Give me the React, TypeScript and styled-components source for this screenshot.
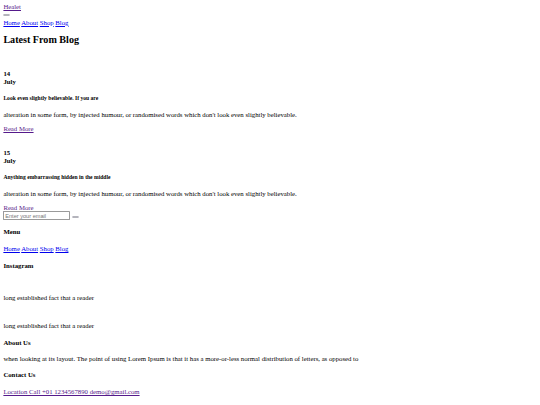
import styled, { createGlobalStyle } from "styled-components";

// The reference is a 1280px-wide page shot down to 540px.
const GlobalStyle = createGlobalStyle`
  html {
    zoom: 0.421875;
  }
  body {
    margin: 8px;
    font-family: "Liberation Serif", "Times New Roman", serif;
    font-size: 16px;
    line-height: 1.15;
    color: #000;
    background: #fff;
  }
`;

const Link = styled.a<{ $visited?: boolean }>`
  color: ${(p) => (p.$visited ? "#551a8b" : "#0000ee")};
  text-decoration: underline;
  cursor: pointer;
`;

const TogglerRow = styled.div`
  height: 18.4px;
  display: flex;
  align-items: center;
`;

const Toggler = styled.button`
  width: 16px;
  height: 6px;
  padding: 0;
  border: 1px solid #b4b4bc;
  border-radius: 3px;
  background: #ececf0;
`;

const Nav = styled.div`
  display: block;
`;

const SectionTitle = styled.h2`
  font-size: 24px;
  font-weight: bold;
  margin: 18px 0 20px;
`;

const Spacer = styled.div<{ $h: number }>`
  height: ${(p) => p.$h}px;
`;

const PostDate = styled.h4`
  font-size: 16px;
  margin: 21.28px 0;
`;

const PostTitle = styled.h5`
  font-size: 13.28px;
  margin: 22.18px 0;
`;

const Text = styled.p`
  margin: 16px 0;
`;

const Form = styled.form`
  display: flex;
  align-items: center;
  gap: 4px;
  height: 18px;
`;

const EmailInput = styled.input`
  width: 150px;
  height: 14px;
  font-family: Arial, "Liberation Sans", sans-serif;
  font-size: 13.33px;
  padding: 1px 2px;
  border: 2px solid #9a9a9a;
  border-radius: 2px;
  &::placeholder {
    color: #757575;
  }
`;

const SmallButton = styled.button`
  width: 16px;
  height: 6px;
  padding: 0;
  margin-top: 6px;
  border: 1px solid #b4b4bc;
  border-radius: 3px;
  background: #ececf0;
`;

const FooterTitle = styled.h4`
  font-size: 16px;
  margin: 21.28px 0;
`;

const ContactTitle = styled(FooterTitle)`
  margin: 20px 0 22px;
`;

const Faint = styled.p`
  color: #555;
  margin: 16px 0;
`;

function Post({ day, title, gap }: { day: string; title: string; gap: number }) {
  return (
    <div>
      <Spacer $h={gap} />
      <PostDate>
        {day}
        <br />
        July
      </PostDate>
      <PostTitle>{title}</PostTitle>
      <Text>
        alteration in some form, by injected humour, or randomised words which
        don't look even slightly believable.
      </Text>
      <Link $visited>Read More</Link>
    </div>
  );
}

export default function App() {
  return (
    <>
      <GlobalStyle />
      <header>
        <Link $visited>Healet</Link>
        <TogglerRow>
          <Toggler />
        </TogglerRow>
        <Nav>
          <Link>Home</Link> <Link>About</Link> <Link>Shop</Link>{" "}
          <Link>Blog</Link>
        </Nav>
      </header>
      <section>
        <SectionTitle>Latest From Blog</SectionTitle>
        <Post day="14" title="Look even slightly believable. If you are" gap={16} />
        <Post day="15" title="Anything embarrassing hidden in the middle" gap={17} />
      </section>
      <footer>
        <Form>
          <EmailInput placeholder="Enter your email" />
          <SmallButton />
        </Form>
        <FooterTitle>Menu</FooterTitle>
        <Nav>
          <Link>Home</Link> <Link>About</Link> <Link>Shop</Link>{" "}
          <Link>Blog</Link>
        </Nav>
        <FooterTitle>Instagram</FooterTitle>
        <Spacer $h={20} />
        <Text>long established fact that a reader</Text>
        <Spacer $h={16} />
        <Text>long established fact that a reader</Text>
        <FooterTitle>About Us</FooterTitle>
        <Text>
          when looking at its layout. The point of using Lorem Ipsum is that it
          has a more-or-less normal distribution of letters, as opposed to
        </Text>
        <ContactTitle>Contact Us</ContactTitle>
        <Link $visited>Location Call +01 1234567890 demo@gmail.com</Link>
        <Faint>Copyright 2019 All Right Reserved By Free Html Templates</Faint>
      </footer>
    </>
  );
}
